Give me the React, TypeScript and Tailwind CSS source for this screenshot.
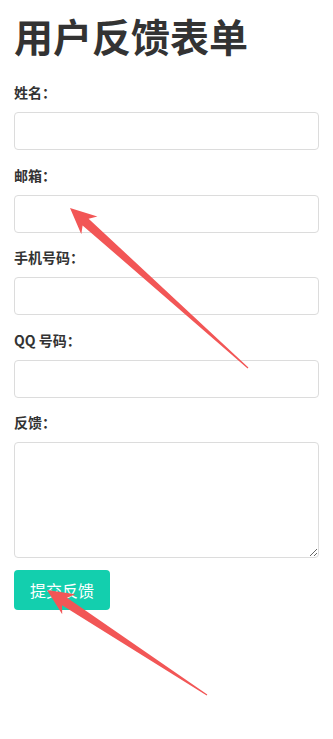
import React from "react";

function arrowPoints(tx: number, ty: number, ex: number, ey: number, headLen: number, headHalf: number, neckHalf: number, tailHalf: number) {
  const dx = ex - tx;
  const dy = ey - ty;
  const len = Math.hypot(dx, dy);
  const ux = dx / len;
  const uy = dy / len;
  const nx = -uy;
  const ny = ux;
  const bx = tx + ux * headLen;
  const by = ty + uy * headLen;
  const kx = tx + ux * (headLen - 5);
  const ky = ty + uy * (headLen - 5);
  const pts: [number, number][] = [
    [tx, ty],
    [bx + nx * headHalf, by + ny * headHalf],
    [kx + nx * neckHalf, ky + ny * neckHalf],
    [ex + nx * tailHalf, ey + ny * tailHalf],
    [ex - nx * tailHalf, ey - ny * tailHalf],
    [kx - nx * neckHalf, ky - ny * neckHalf],
    [bx - nx * headHalf, by - ny * headHalf],
  ];
  return pts.map((p) => `${p[0].toFixed(1)},${p[1].toFixed(1)}`).join(" ");
}

const font = { fontFamily: '"Noto Sans CJK SC", "Noto Sans", sans-serif' };

function Field({ label, textarea }: { label: string; textarea?: boolean }) {
  return (
    <div className="flex flex-col">
      <label className="text-[14px] leading-[20px] font-bold text-[#333] mb-[10px]">{label}</label>
      {textarea ? (
        <textarea className="w-full h-[116px] border border-[#dcdcdc] rounded-[4px] bg-white mb-[12px] resize-y" />
      ) : (
        <input className="w-full h-[38px] border border-[#dcdcdc] rounded-[4px] bg-white mb-[14.5px]" />
      )}
    </div>
  );
}

export default function App() {
  return (
    <div className="relative w-[333px] h-[739px] bg-white overflow-hidden" style={font}>
      <div className="px-[14px] pt-[12px]">
        <h1 className="text-[39px] leading-[46px] font-bold text-[#333] mb-[24px]">用户反馈表单</h1>
        <Field label="姓名：" />
        <Field label="邮箱：" />
        <Field label="手机号码：" />
        <Field label="QQ 号码：" />
        <Field label="反馈：" textarea />
        <button className="w-[96px] h-[40px] rounded-[4px] bg-[#13cfae] text-white text-[16px]">提交反馈</button>
      </div>
      <svg className="absolute inset-0 pointer-events-none" width="333" height="739" viewBox="0 0 333 739">
        <polygon points={arrowPoints(70, 208, 248, 368, 26, 12, 4.5, 0.6)} fill="#f25656" />
        <polygon points={arrowPoints(47, 590, 207, 695, 26, 12, 4.5, 0.6)} fill="#f25656" />
      </svg>
    </div>
  );
}
